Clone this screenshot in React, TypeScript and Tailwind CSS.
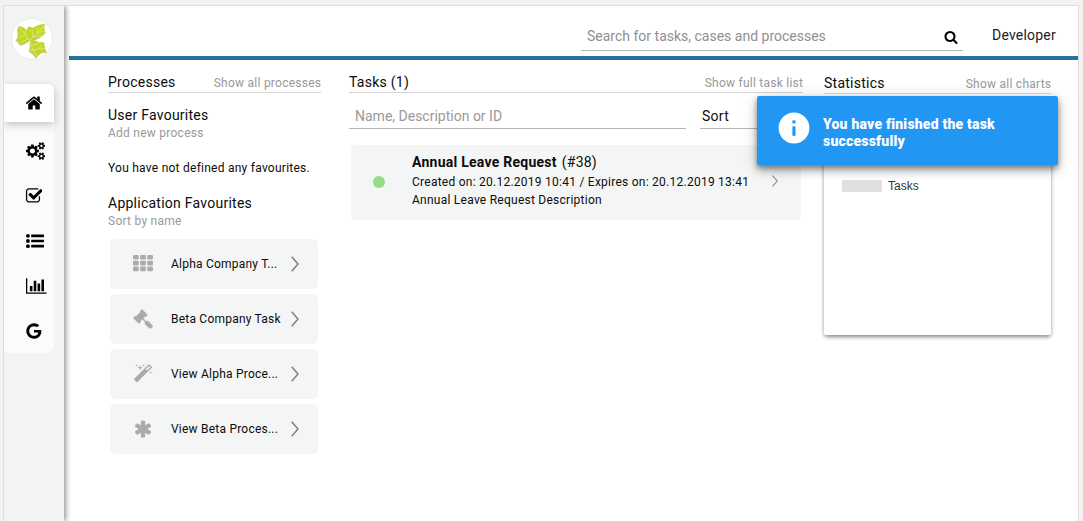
import type { ReactNode } from "react";

type IconProps = { className?: string };

const COG_PATH =
  "M896 896q0-106-75-181t-181-75-181 75-75 181 75 181 181 75 181-75 75-181zm768 512q0-52-38-90t-90-38-90 38-38 90q0 53 37.5 90.5t90.5 37.5 90.5-37.5 37.5-90.5zm0-1024q0-52-38-90t-90-38-90 38-38 90q0 53 37.5 90.5t90.5 37.5 90.5-37.5 37.5-90.5zm-384 421v185q0 10-7 19.5t-16 10.5l-155 24q-11 35-32 76 34 48 90 115 7 11 7 20 0 12-7 19-23 30-82.5 89.5t-78.5 59.5q-11 0-21-7l-115-90q-37 19-77 31-11 108-23 155-7 24-30 24h-186q-11 0-20-7.5t-10-17.5l-23-153q-34-10-75-31l-118 89q-7 7-20 7-11 0-21-8-144-133-144-160 0-9 7-19 10-14 41-53t47-61q-23-44-35-82l-152-24q-10-1-17-9.5t-7-19.5v-185q0-10 7-19.5t16-10.5l155-24q11-35 32-76-34-48-90-115-7-11-7-20 0-12 7-20 22-30 82-89t79-59q11 0 21 7l115 90q34-18 77-32 11-108 23-154 7-24 30-24h186q11 0 20 7.5t10 17.5l23 153q34 10 75 31l118-89q8-7 20-7 11 0 21 8 144 133 144 160 0 8-7 19-12 16-42 54t-45 60q23 48 34 82l152 23q10 2 17 10.5t7 19.5zm640 533v140q0 16-149 31-12 27-30 52 51 113 51 138 0 4-4 7-122 71-124 71-8 0-46-47t-52-68q-20 2-30 2t-30-2q-14 21-52 68t-46 47q-2 0-124-71-4-3-4-7 0-25 51-138-18-25-30-52-149-15-149-31v-140q0-16 149-31 13-29 30-52-51-113-51-138 0-4 4-7 4-2 35-20t59-34 30-16q8 0 46 46.5t52 67.5q20-2 30-2t30 2q51-71 92-112l6-2q4 0 124 70 4 3 4 7 0 25-51 138 17 23 30 52 149 15 149 31zm0-1024v140q0 16-149 31-12 27-30 52 51 113 51 138 0 4-4 7-122 71-124 71-8 0-46-47t-52-68q-20 2-30 2t-30-2q-14 21-52 68t-46 47q-2 0-124-71-4-3-4-7 0-25 51-138-18-25-30-52-149-15-149-31v-140q0-16 149-31 13-29 30-52-51-113-51-138 0-4 4-7 4-2 35-20t59-34 30-16q8 0 46 46.5t52 67.5q20-2 30-2t30 2q51-71 92-112l6-2q4 0 124 70 4 3 4 7 0 25-51 138 17 23 30 52 149 15 149 31z";

function HomeIcon() {
  return (
    <svg className="block h-[18px] w-[18px] -ml-px" viewBox="0 0 1792 1792" fill="currentColor">
      <path d="M1472 992v480q0 26-19 45t-45 19h-384v-384h-256v384h-384q-26 0-45-19t-19-45v-480q0-1 .5-3t.5-3l575-474 575 474q1 2 1 6zm223-69l-62 74q-8 9-21 11h-3q-13 0-21-7l-692-577-692 577q-12 8-24 7-13-2-21-11l-62-74q-8-10-7-23.5t11-21.5l719-599q32-26 76-26t76 26l244 204v-195q0-14 9-23t23-9h192q14 0 23 9t9 23v408l219 182q10 8 11 21.5t-7 23.5z" />
    </svg>
  );
}

function CogsIcon() {
  return (
    <svg className="block h-[18px] w-[19.3px]" viewBox="0 0 1920 1792" fill="currentColor">
      <path d={COG_PATH} />
    </svg>
  );
}

function CheckIcon() {
  return (
    <svg className="block h-[18px] w-[18px] -ml-[2px]" viewBox="0 0 1792 1792" fill="currentColor">
      <path d="M1472 930v318q0 119-84.5 203.5t-203.5 84.5h-832q-119 0-203.5-84.5t-84.5-203.5v-832q0-119 84.5-203.5t203.5-84.5h832q63 0 117 25 15 7 18 23 3 17-9 29l-49 49q-10 10-23 10-3 0-9-2-23-6-45-6h-832q-66 0-113 47t-47 113v832q0 66 47 113t113 47h832q66 0 113-47t47-113v-254q0-13 9-22l64-64q10-10 23-10 6 0 12 3 20 8 20 29zm231-489l-814 814q-24 24-57 24t-57-24l-430-430q-24-24-24-57t24-57l110-110q24-24 57-24t57 24l263 263 647-647q24-24 57-24t57 24l110 110q24 24 24 57t-24 57z" transform="translate(128 0)" />
    </svg>
  );
}

function ListIcon() {
  return (
    <svg className="block h-[18px] w-[18px]" viewBox="0 0 1792 1792" fill="currentColor">
      {[384, 896, 1408].map((y) => (
        <g key={y}>
          <circle cx="192" cy={y} r="192" />
          <rect x="512" y={y - 128} width="1280" height="256" rx="32" />
        </g>
      ))}
    </svg>
  );
}

function ChartIcon() {
  return (
    <svg className="block h-[18px] w-[20.6px]" viewBox="0 0 2048 1792" fill="currentColor">
      <path d="M640 896v512h-256v-512h256zm384-512v1024h-256v-1024h256zm1024 1152v128h-2048v-1536h128v1408h1920zm-640-896v768h-256v-768h256zm384-384v1152h-256v-1152h256z" />
    </svg>
  );
}

function GoogleIcon() {
  return (
    <svg className="block h-[18px] w-[18px] -ml-px" viewBox="0 0 1792 1792" fill="currentColor">
      <path d="M896 786h725q12 67 12 128 0 217-91 387.5t-259.5 266.5-386.5 96q-157 0-299-60.5t-245-163.5-163.5-245-60.5-299 60.5-299 163.5-245 245-163.5 299-60.5q300 0 515 201l-209 201q-123-119-306-119-129 0-238.5 65t-173.5 176.5-64 243.5 64 243.5 173.5 176.5 238.5 65q87 0 160-24t120-60 82-82 51.5-87 22.5-78h-436v-264z" />
    </svg>
  );
}

function SearchIcon() {
  return (
    <svg className="block h-[14px] w-[14px]" viewBox="0 0 1792 1792" fill="currentColor">
      <path d="M1216 832q0-185-131.5-316.5t-316.5-131.5-316.5 131.5-131.5 316.5 131.5 316.5 316.5 131.5 316.5-131.5 131.5-316.5zm512 832q0 52-38 90t-90 38q-54 0-90-38l-343-342q-179 124-399 124-143 0-273.5-55.5t-225-150-150-225-55.5-273.5 55.5-273.5 150-225 225-150 273.5-55.5 273.5 55.5 225 150 150 225 55.5 273.5q0 220-124 399l343 343q37 37 37 90z" />
    </svg>
  );
}

function GridIcon() {
  return (
    <svg className="block h-[20px] w-[20px]" viewBox="0 0 20 20" fill="currentColor">
      {[1, 6.8, 12.6].map((y) =>
        [0, 7.1, 14.2].map((x) => <rect key={`${x}-${y}`} x={x} y={y} width="5.8" height="4.6" rx="1.1" />),
      )}
    </svg>
  );
}

function GavelIcon() {
  return (
    <svg className="block h-[20px] w-[20px]" viewBox="0 0 1792 1792" fill="currentColor">
      <path d="M1771 1536q0 53-37 90l-107 108q-39 37-91 37-53 0-90-37l-363-364q-38-36-38-90 0-53 43-96l-256-256-126 126q-14 14-34 14t-34-14q2 2 12.5 12t12.5 13 10 11.5 10 13.5 6 13.5 5.5 16.5 1.5 18q0 38-28 68-3 3-16.5 18t-19 20.5-18.5 16.5-22 15.5-22 9-26 4.5q-40 0-68-28l-408-408q-28-28-28-68 0-13 4.5-26t9-22 15.5-22 16.5-18.5 20.5-19 18-16.5q30-28 68-28 10 0 18 1.5t16.5 5.5 13.5 6 13.5 10 11.5 10 13 12.5 12 12.5q-14-14-14-34t14-34l348-348q14-14 34-14t34 14q-2-2-12.5-12t-12.5-13-10-11.5-10-13.5-6-13.5-5.5-16.5-1.5-18q0-38 28-68 3-3 16.5-18t19-20.5 18.5-16.5 22-15.5 22-9 26-4.5q40 0 68 28l408 408q28 28 28 68 0 13-4.5 26t-9 22-15.5 22-16.5 18.5-20.5 19-18 16.5q-30 28-68 28-10 0-18-1.5t-16.5-5.5-13.5-6-13.5-10-11.5-10-13-12.5-12-12.5q14 14 14 34t-14 34l-126 126 256 256q43-43 96-43 52 0 91 37l363 363q37 39 37 91z" />
    </svg>
  );
}

function MagicIcon() {
  return (
    <svg className="block h-[20px] w-[20px]" viewBox="0 0 1792 1792" fill="currentColor">
      <path d="M1254 581l293-293-107-107-293 293zm447-293q0 27-18 45l-1286 1286q-18 18-45 18t-45-18l-198-198q-18-18-18-45t18-45l1286-1286q18-18 45-18t45 18l198 198q18 18 18 45zm-1351-190l98 30-98 30-30 98-30-98-98-30 98-30 30-98zm350 162l196 60-196 60-60 196-60-196-196-60 196-60 60-196zm930 478l98 30-98 30-30 98-30-98-98-30 98-30 30-98zm-640-640l98 30-98 30-30 98-30-98-98-30 98-30 30-98z" />
    </svg>
  );
}

function AsteriskIcon() {
  return (
    <svg className="block h-[20px] w-[20px]" viewBox="0 0 1792 1792" fill="currentColor">
      <path d="M1546 1050q46 26 59.5 77.5t-12.5 97.5l-64 110q-26 46-77.5 59.5t-97.5-12.5l-266-153v307q0 52-38 90t-90 38h-128q-52 0-90-38t-38-90v-307l-266 153q-46 26-97.5 12.5t-77.5-59.5l-64-110q-26-46-12.5-97.5t59.5-77.5l266-154-266-154q-46-26-59.5-77.5t12.5-97.5l64-110q26-46 77.5-59.5t97.5 12.5l266 153v-307q0-52 38-90t90-38h128q52 0 90 38t38 90v307l266-153q46-26 97.5-12.5t77.5 59.5l64 110q26 46 12.5 97.5t-59.5 77.5l-266 154z" />
    </svg>
  );
}

function Chevron({ className }: IconProps) {
  return (
    <svg className={className} viewBox="0 0 8 16" fill="none" stroke="currentColor" strokeWidth="1.5">
      <path d="M0.7 0.7L7 8L0.7 15.3" />
    </svg>
  );
}

function InfoIcon() {
  return (
    <svg className="mt-[16px] block h-[32px] w-[32px] shrink-0" viewBox="0 0 32 32">
      <circle cx="16" cy="16" r="15.4" fill="#fff" />
      <rect x="14.4" y="8.4" width="3.1" height="3" fill="#2196f3" />
      <rect x="14.4" y="14.3" width="3.1" height="9.5" fill="#2196f3" />
    </svg>
  );
}

const LEAVES = [
  "M19 22.500Q15 20 15.500 16Q15 12 17.500 8.500Q20 8.500 22 10Q27 6 34 6Q32.500 10 34.500 15Q31 18 28 20Q23 23 19 22.500Z",
  "M18.500 23Q14 26.500 9 27Q8.500 24 5 22Q8 19 7 15Q6 11 8 8Q14 9 16 13Q19 18 18.500 23Z",
  "M19 23.500Q24 21 28 24.500Q31 23.500 33.500 25Q33 30 36 34.500Q32 33.500 29.500 35.500Q27 37 25.500 40Q22 35 18.500 33Q20 28 19 23.500Z",
];

function Logo() {
  return (
    <svg className="block h-[42px] w-[42px]" viewBox="0 0 42 42">
      <circle cx="21" cy="21" r="20.5" fill="#fff" stroke="#e9ebeb" />
      <g fill="#8d8d8d" opacity=".5" transform="translate(-.6 .8)">
        {LEAVES.map((d) => <path key={d} d={d} />)}
      </g>
      <g fill="#c3d62a">
        {LEAVES.map((d) => <path key={d} d={d} />)}
      </g>
      <g fill="none" stroke="#e9f0a4" strokeWidth=".6">
        <path d="M18.500 22.500Q26 16 32.500 8M22 19L21 12M26.500 14.500V9.500M22 19L30 17.500M26.500 14.500L33 13.500M18.500 22.500Q14 15 9 10M14.500 17L8.500 19M14.500 17V12.500M17 20.500L10.500 24M19 23.500Q21.500 31 25.500 38M20.500 27L28 25.500M22.500 31.500L33 30.500M22.500 31.500L20 32M27.500 31L31 27" />
      </g>
    </svg>
  );
}

function SideItem({ children }: { children: ReactNode }) {
  return <div className="flex h-[45px] items-center pb-px pl-[22px]">{children}</div>;
}

function PanelHeader({ title, link }: { title: string; link: string }) {
  return (
    <div className="flex h-[19px] items-baseline justify-between border-b border-[#d4d4d4] leading-4">
      <span>{title}</span>
      <span className="-mr-[.25px] text-xs leading-4 text-[#999]">{link}</span>
    </div>
  );
}

function Favourite({ icon, label }: { icon: ReactNode; label: string }) {
  return (
    <div className="flex h-[50px] items-center rounded-[5px] bg-[#f4f6f5] pl-[23px]">
      <span className="w-[38px] text-[#ababab]">{icon}</span>
      <span className="w-[120px] whitespace-nowrap text-xs tracking-[.22px]">{label}</span>
      <Chevron className="h-[16px] w-[8px] text-[#808080]" />
    </div>
  );
}

export default function App() {
  return (
    <div className="relative h-[521px] w-[1083px] overflow-hidden bg-[#f2f2f2] pl-[3px] pt-[5px] font-[Roboto,sans-serif] text-sm tracking-[.25px] text-[#0c0c0c]">
      <div className="flex h-[516px] w-[1076px] border-l border-r border-t border-[#dedede] bg-white">
        <aside className="relative z-10 w-[60px] shrink-0 bg-[#f3f5f5] pt-[12px] shadow-[2px_0_5px_rgba(0,0,0,.42)] [clip-path:inset(0_-12px_0_0)]">
          <div className="pl-[7px]">
            <Logo />
          </div>
          <nav className="mt-6 h-[269px] w-[50px] rounded-r-[8px] bg-[#fbfbfb] text-black">
            <div className="mb-[7px] flex h-[38px] items-center rounded-tr-[6px] bg-white pl-[22px] shadow-[0_3px_8px_rgba(0,0,0,.22)]">
              <HomeIcon />
            </div>
            <SideItem><CogsIcon /></SideItem>
            <SideItem><CheckIcon /></SideItem>
            <SideItem><ListIcon /></SideItem>
            <SideItem><ChartIcon /></SideItem>
            <SideItem><GoogleIcon /></SideItem>
          </nav>
        </aside>

        <div className="min-w-0 flex-1">
          <header className="ml-[5px] flex h-[54px] border-b-4 border-[#26719a]">
            <div className="ml-[512px] mt-[15px] flex h-[30px] w-[382px] justify-between border-b border-[#b5b5b5] pl-[6px] pr-[5px]">
              <span className="mt-[7px] leading-4 tracking-normal text-[#8f8f8f]">Search for tasks, cases and processes</span>
              <span className="mt-[9px] text-black"><SearchIcon /></span>
            </div>
            <span className="ml-[29px] mt-[21px] leading-4 tracking-[.2px] text-[#222]">Developer</span>
          </header>

          <main className="flex pl-[44px] pt-[14px]">
            <section className="w-[213px]">
              <PanelHeader title="Processes" link="Show all processes" />
              <div className="mt-[14px] leading-4">User Favourites</div>
              <div className="mt-[3px] text-xs leading-[14px] text-[#999]">Add new process</div>
              <div className="mt-[21px] text-xs leading-[14px]">You have not defined any favourites.</div>
              <div className="mt-[20px] leading-4">Application Favourites</div>
              <div className="mt-[3px] text-xs leading-[14px] text-[#999]">Sort by name</div>
              <div className="ml-[2px] mt-[11px] flex w-[208px] flex-col gap-[5px]">
                <Favourite icon={<GridIcon />} label="Alpha Company T..." />
                <Favourite icon={<GavelIcon />} label="Beta Company Task" />
                <Favourite icon={<MagicIcon />} label="View Alpha Proce..." />
                <Favourite icon={<AsteriskIcon />} label="View Beta Proces..." />
              </div>
            </section>

            <section className="ml-[28px] w-[454px]">
              <PanelHeader title="Tasks (1)" link="Show full task list" />
              <div className="flex gap-[14px] leading-4">
                <div className="h-[36px] w-[337px] border-b border-[#b5b5b5] pl-[6px] pt-[15px] tracking-normal text-[#999]">
                  Name, Description or ID
                </div>
                <div className="h-[36px] flex-1 border-b border-[#b5b5b5] pl-[2px] pt-[15px]">Sort</div>
              </div>
              <div className="ml-[2px] mt-4 flex h-[75px] w-[450px] rounded-[5px] bg-[#f4f6f5] pl-[22px]">
                <span className="mt-[31px] h-[12px] w-[12px] rounded-full bg-[#96dc85]" />
                <div className="ml-[27px] w-[360px] pt-[9px]">
                  <div className="leading-4"><b className="mr-[5px] font-bold">Annual Leave Request</b>(#38)</div>
                  <div className="mt-[5px] whitespace-nowrap text-xs leading-[14px]">
                    Created on: 20.12.2019 10:41 / Expires on: 20.12.2019 13:41
                  </div>
                  <div className="mt-[4px] text-xs leading-[14px]">Annual Leave Request Description</div>
                </div>
                <Chevron className="mt-[30px] h-[12px] w-[6px] text-[#8c8c8c]" />
              </div>
            </section>

            <section className="ml-[21px] w-[227px] pt-px">
              <PanelHeader title="Statistics" link="Show all charts" />
              <div className="mt-[11px] h-[230px] rounded-[2px] bg-white pt-[75px] shadow-[0_3px_4px_-1px_rgba(0,0,0,.35),0_1px_4px_rgba(0,0,0,.22)]">
                <div className="flex h-[12px] items-center pl-[18px]">
                  <span className="h-[12px] w-[40px] bg-[#e0e0e0]" />
                  <span className="ml-[6px] font-['Liberation_Sans',sans-serif] text-xs leading-[12px] tracking-normal text-[#333]">Tasks</span>
                </div>
              </div>
            </section>
          </main>
        </div>
      </div>

      <div className="absolute left-[757px] top-[96px] z-20 flex h-[69px] w-[301px] rounded-[2px] bg-[#2196f3] pl-[21px] text-white shadow-[0_6px_10px_rgba(0,0,0,.25),0_1px_18px_rgba(0,0,0,.12),0_3px_5px_rgba(0,0,0,.3)]">
        <InfoIcon />
        <div className="ml-[13px] mt-[20px] w-[200px] text-sm font-black leading-[17px] tracking-[.2px]">
          You have finished the task successfully
        </div>
      </div>
    </div>
  );
}
